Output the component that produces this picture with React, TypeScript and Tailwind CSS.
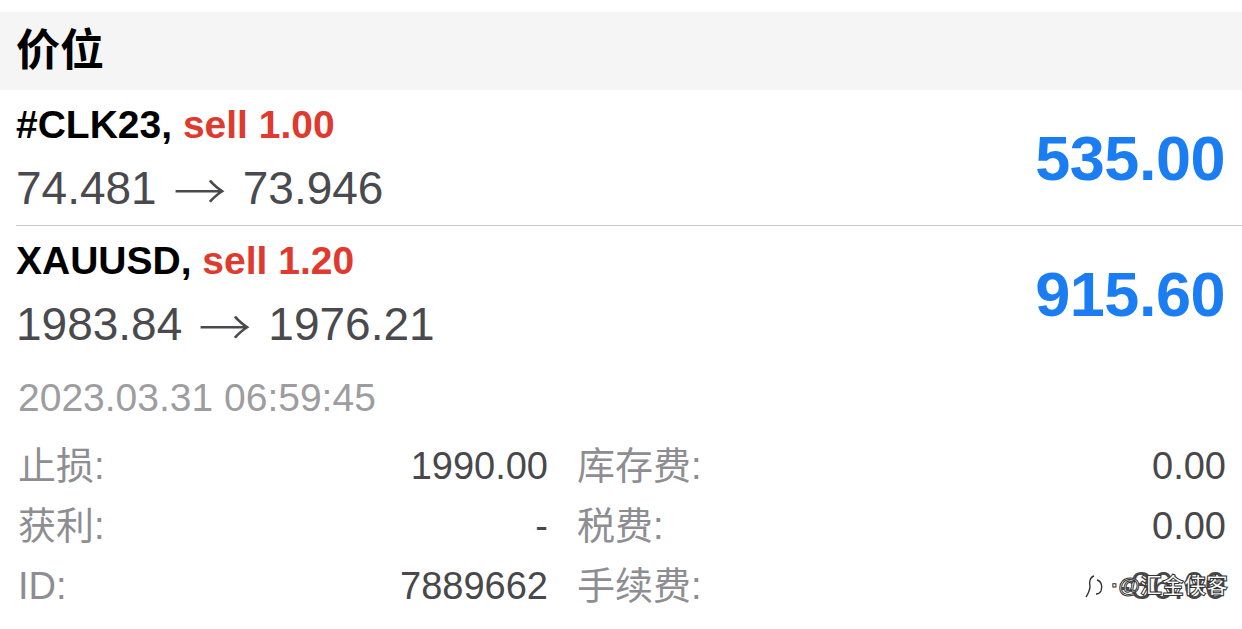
import React from "react";

type Position = {
  symbol: string;
  side: string;
  open: string;
  close: string;
  profit: string;
};

const positions: Position[] = [
  { symbol: "#CLK23", side: "sell 1.00", open: "74.481", close: "73.946", profit: "535.00" },
  { symbol: "XAUUSD", side: "sell 1.20", open: "1983.84", close: "1976.21", profit: "915.60" },
];

const details: [string, string, string, string][] = [
  ["止损:", "1990.00", "库存费:", "0.00"],
  ["获利:", "-", "税费:", "0.00"],
  ["ID:", "7889662", "手续费:", "-36.00"],
];

const font = "font-['Liberation_Sans','Noto_Sans_CJK_SC',sans-serif]";

const App: React.FC = () => {
  return (
    <div className={`relative w-[1242px] h-[629px] overflow-hidden bg-white ${font}`}>
      <div className="h-[12px] bg-white" />

      {/* section header */}
      <div className="h-[78px] bg-[#f5f5f5] px-4 flex items-center">
        <span className="text-[44px] font-bold text-black leading-none">价位</span>
      </div>

      {/* positions */}
      {positions.map((p, i) => (
        <div key={p.symbol} className="pl-4">
          <div
            className={`flex items-center justify-between pr-4 pt-[13px] pb-[11px] ${
              i === 0 ? "border-b border-[#c8c8cc]" : ""
            }`}
          >
            <div className="flex flex-col">
              <div className="text-[39px] leading-[44px] font-bold">
                <span className="text-black">{p.symbol}, </span>
                <span className="text-[#e0392e]">{p.side}</span>
              </div>
              <div className="mt-[15px] text-[46px] leading-[52px] text-[#4a4a4e] flex items-center">
                <span>{p.open}</span>
                <span className="mx-[19px] font-['Noto_Sans_CJK_SC',sans-serif] font-light text-[48px] leading-[52px] inline-block scale-x-110">
                  →
                </span>
                <span>{p.close}</span>
              </div>
            </div>
            <div className="text-[63px] font-bold leading-none text-[#1a7df2] tracking-[-0.5px] mr-[1px]">
              {p.profit}
            </div>
          </div>
        </div>
      ))}

      {/* time */}
      <div className="px-[18px] mt-[15px] text-[39px] leading-[44px] text-[#9d9d9f]">
        2023.03.31 06:59:45
      </div>

      {/* details grid */}
      <div className="mt-[16px] pl-[18px] pr-4 grid grid-cols-[530px_1fr] gap-x-[29px]">
        {details.map(([l1, v1, l2, v2]) => (
          <React.Fragment key={l1}>
            <div className="flex justify-between items-center h-[60px] text-[38px]">
              <span className="text-[#8e8e92]">{l1}</span>
              <span className="text-[#48484a]">{v1}</span>
            </div>
            <div className="flex justify-between items-center h-[60px] text-[38px]">
              <span className="text-[#8e8e92]">{l2}</span>
              <span className="text-[#48484a]">{v2}</span>
            </div>
          </React.Fragment>
        ))}
      </div>

      {/* watermark */}
      <div className="absolute right-[14px] top-[573px] flex items-center gap-[4px]">
        <svg width="22" height="26" viewBox="0 0 22 26" fill="none" stroke="#333" strokeWidth="1.4">
          <path d="M9 3 C5 4 4 9 5 13 C5 17 3 21 1 24" />
          <path d="M12 7 C16 8 18 13 16 18 C15 20 13 21 11 21" />
        </svg>
        <span className="text-[22px] font-bold text-white leading-none [-webkit-text-stroke:1px_#333]">
          ·@汇金侠客
        </span>
      </div>
    </div>
  );
};

export default App;
